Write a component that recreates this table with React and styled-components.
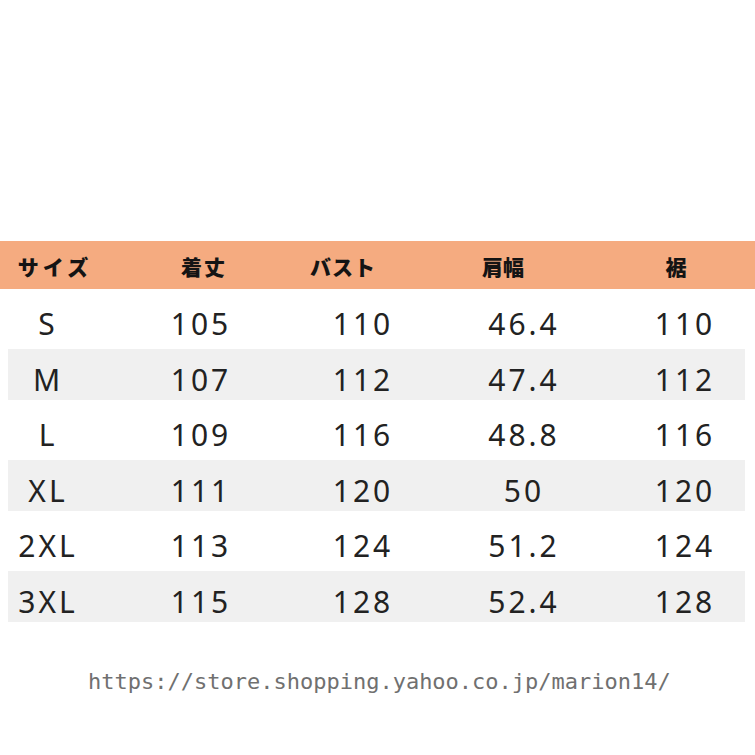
import styled, { createGlobalStyle } from "styled-components";

const GlobalStyle = createGlobalStyle`
  html, body {
    margin: 0;
    padding: 0;
    background: #ffffff;
  }
`;

const Page = styled.div`
  width: 755px;
  height: 755px;
  box-sizing: border-box;
  padding-top: 241px;
  background: #ffffff;
  overflow: hidden;
`;

const HeaderBar = styled.div`
  height: 48px;
  background-color: #f5ab80;
  display: grid;
  grid-template-columns: 110px 188px 90px 230px 116px;
  align-items: center;
`;

const HeaderCell = styled.div`
  text-align: center;
  white-space: nowrap;
  font-family: "Noto Sans CJK JP", "Noto Sans CJK SC", sans-serif;
  font-weight: 900;
  font-size: 21px;
  letter-spacing: ${(props) => props.$spacing || "2px"};
  color: #141414;
  padding-top: 2px;
`;

const Row = styled.div`
  height: ${(props) => (props.$shaded ? "51px" : "60px")};
  margin: 0 10px 0 8px;
  box-sizing: border-box;
  padding-top: 10px;
  background-color: ${(props) => (props.$shaded ? "#f0f0f0" : "transparent")};
  display: grid;
  grid-template-columns: 80px 226px 98px 224px 98px;
  align-items: center;
`;

const Cell = styled.div`
  text-align: center;
  white-space: nowrap;
  font-family: "Noto Sans", "Open Sans", sans-serif;
  font-size: 30px;
  letter-spacing: 3px;
  color: #222222;
  line-height: 1;
`;

const Footer = styled.div`
  margin-top: 47px;
  padding-left: 88px;
  font-family: "DejaVu Sans Mono", "Liberation Mono", monospace;
  font-size: 22px;
  color: #707070;
  white-space: nowrap;
`;

const headers = [
  { label: "サイズ", spacing: "4px" },
  { label: "着丈", spacing: "2px" },
  { label: "バスト", spacing: "1px" },
  { label: "肩幅", spacing: "0" },
  { label: "裾", spacing: "0" },
];

const rows = [
  ["S", "105", "110", "46.4", "110"],
  ["M", "107", "112", "47.4", "112"],
  ["L", "109", "116", "48.8", "116"],
  ["XL", "111", "120", "50", "120"],
  ["2XL", "113", "124", "51.2", "124"],
  ["3XL", "115", "128", "52.4", "128"],
];

export default function App() {
  return (
    <>
      <GlobalStyle />
      <Page>
        <HeaderBar>
          {headers.map((h) => (
            <HeaderCell key={h.label} $spacing={h.spacing}>
              {h.label}
            </HeaderCell>
          ))}
        </HeaderBar>
        {rows.map((r, i) => (
          <Row key={r[0]} $shaded={i % 2 === 1}>
            {r.map((v, j) => (
              <Cell key={j}>{v}</Cell>
            ))}
          </Row>
        ))}
        <Footer>https://store.shopping.yahoo.co.jp/marion14/</Footer>
      </Page>
    </>
  );
}
